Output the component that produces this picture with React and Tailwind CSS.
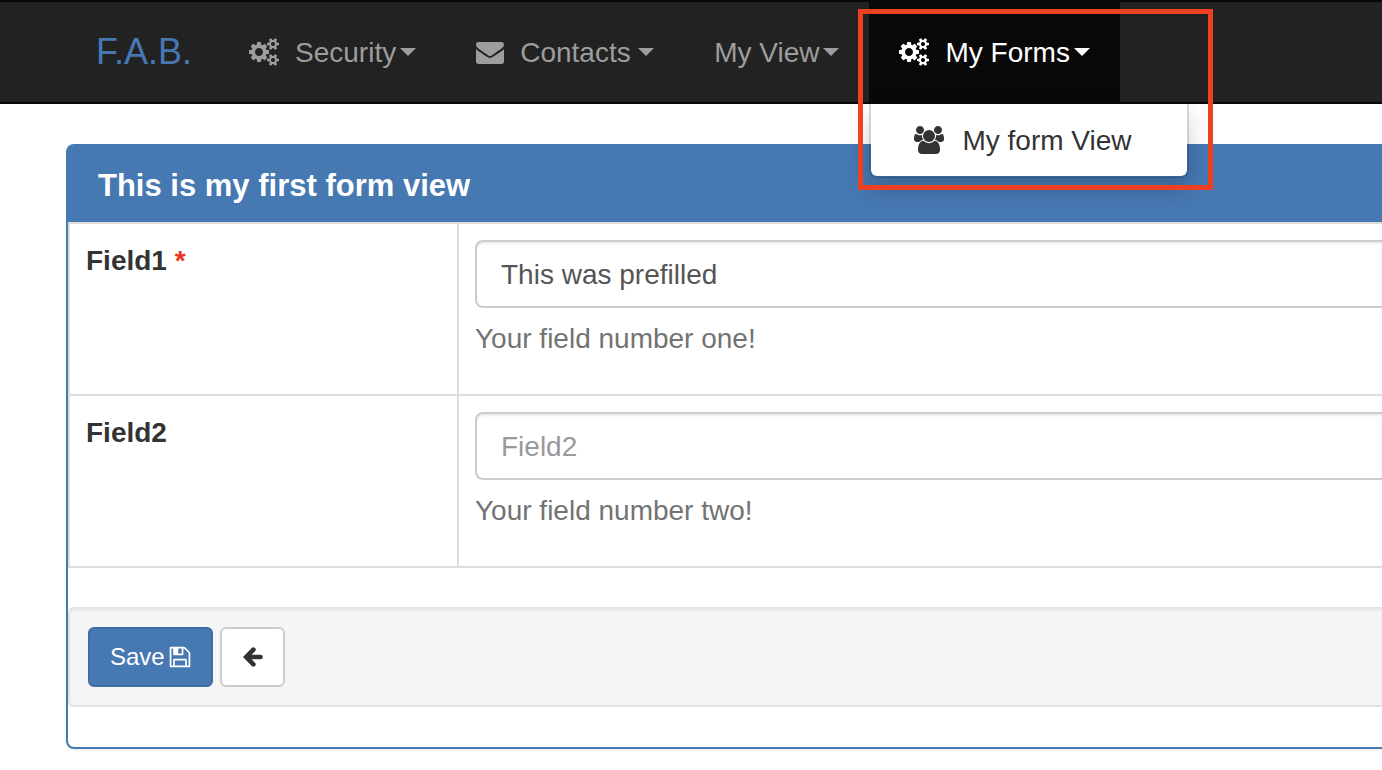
const PATHS = {
  cogs: {
    width: 1920,
    d: "M896 896q0-106-75-181t-181-75-181 75-75 181 75 181 181 75 181-75 75-181zm768 512q0-52-38-90t-90-38-90 38-38 90q0 53 37.5 90.5t90.5 37.5 90.5-37.5 37.5-90.5zm0-1024q0-52-38-90t-90-38-90 38-38 90q0 53 37.5 90.5t90.5 37.5 90.5-37.5 37.5-90.5zm-384 421v185q0 10-7 19.5t-16 10.5l-155 24q-11 35-32 76 34 48 90 115 7 11 7 20 0 12-7 19-23 30-82.5 89.5t-78.5 59.5q-11 0-21-7l-115-90q-37 19-77 31-11 108-23 155-7 24-30 24h-186q-11 0-20-7.5t-10-17.5l-23-153q-34-10-75-31l-118 89q-7 7-20 7-11 0-21-8-144-133-144-160 0-9 7-19 10-14 41-53t47-61q-23-44-35-82l-152-24q-10-1-17-9.5t-7-19.5v-185q0-10 7-19.5t16-10.5l155-24q11-35 32-76-34-48-90-115-7-11-7-20 0-12 7-20 22-30 82-89t79-59q11 0 21 7l115 90q34-18 77-32 11-108 23-154 7-24 30-24h186q11 0 20 7.5t10 17.5l23 153q34 10 75 31l118-89q8-7 20-7 11 0 21 8 144 133 144 160 0 8-7 19-12 16-42 54t-45 60q23 48 34 82l152 23q10 2 17 10.5t7 19.5zm640 533v140q0 16-149 31-12 27-30 52 51 113 51 138 0 4-4 7-122 71-124 71-8 0-46-47t-52-68q-20 2-30 2t-30-2q-14 21-52 68t-46 47q-2 0-124-71-4-3-4-7 0-25 51-138-18-25-30-52-149-15-149-31v-140q0-16 149-31 13-29 30-52-51-113-51-138 0-4 4-7 4-2 35-20t59-34 30-16q8 0 46 46.5t52 67.5q20-2 30-2t30 2q51-71 92-112l6-2q4 0 124 70 4 3 4 7 0 25-51 138 17 23 30 52 149 15 149 31zm0-1024v140q0 16-149 31-12 27-30 52 51 113 51 138 0 4-4 7-122 71-124 71-8 0-46-47t-52-68q-20 2-30 2t-30-2q-14 21-52 68t-46 47q-2 0-124-71-4-3-4-7 0-25 51-138-18-25-30-52-149-15-149-31v-140q0-16 149-31 13-29 30-52-51-113-51-138 0-4 4-7 4-2 35-20t59-34 30-16q8 0 46 46.5t52 67.5q20-2 30-2t30 2q51-71 92-112l6-2q4 0 124 70 4 3 4 7 0 25-51 138 17 23 30 52 149 15 149 31z",
  },
  envelope: {
    width: 1792,
    d: "M1792 710v794q0 66-47 113t-113 47h-1472q-66 0-113-47t-47-113v-794q44 49 101 87 362 246 497 345 57 42 92.5 65.5t94.5 48 110 24.5h2q51 0 110-24.5t94.5-48 92.5-65.5q170-123 498-345 57-39 100-87zm0-294q0 79-49 151t-122 123q-376 261-468 325-10 7-42.5 31t-54 38.5-52 32.5-57.5 27-50 9h-2q-23 0-50-9t-57.5-27-52-32.5-54-38.5-42.5-31q-91-64-262-182.5t-205-142.5q-62-42-117-115.5t-55-136.5q0-78 41.5-130t118.5-52h1472q65 0 112.5 47t47.5 113z",
  },
  users: {
    width: 1920,
    d: "M593 896q-162 5-265 128h-134q-82 0-138-40.5t-56-118.5q0-353 124-353 6 0 43.5 21t97.5 42.5 119 21.5q67 0 133-23-5 37-5 66 0 139 81 256zm1071 637q0 120-73 189.5t-194 69.5h-874q-121 0-194-69.5t-73-189.5q0-53 3.5-103.5t14-109 26.5-108.5 43-97.5 62-81 85.5-53.5 111.5-20q10 0 43 21.5t73 48 107 48 135 21.5 135-21.5 107-48 73-48 43-21.5q61 0 111.5 20t85.5 53.5 62 81 43 97.5 26.5 108.5 14 109 3.5 103.5zm-1024-1277q0 106-75 181t-181 75-181-75-75-181 75-181 181-75 181 75 75 181zm704 384q0 159-112.5 271.5t-271.5 112.5-271.5-112.5-112.5-271.5 112.5-271.5 271.5-112.5 271.5 112.5 112.5 271.5zm576 225q0 78-56 118.5t-138 40.5h-134q-103-123-265-128 81-117 81-256 0-29-5-66 66 23 133 23 59 0 119-21.5t97.5-42.5 43.5-21q124 0 124 353zm-128-609q0 106-75 181t-181 75-181-75-75-181 75-181 181-75 181 75 75 181z",
  },
  floppy: {
    width: 1792,
    d: "M512 1536h768v-384h-768v384zm896 0h128v-896q0-14-10-38.5t-20-34.5l-281-281q-10-10-34-20t-39-10v416q0 40-28 68t-68 28h-576q-40 0-68-28t-28-68v-416h-128v1280h128v-416q0-40 28-68t68-28h832q40 0 68 28t28 68v416zm-384-928v-320q0-13-9.5-22.5t-22.5-9.5h-192q-13 0-22.5 9.5t-9.5 22.5v320q0 13 9.5 22.5t22.5 9.5h192q13 0 22.5-9.5t9.5-22.5zm640 32v928q0 40-28 68t-68 28h-1344q-40 0-68-28t-28-68v-1344q0-40 28-68t68-28h928q40 0 88 20t76 48l280 280q28 28 48 76t20 88z",
  },
};

function Icon({ name, className }) {
  const { width, d } = PATHS[name];
  return (
    <svg viewBox={`0 0 ${width} 1792`} className={`shrink-0 ${className}`} fill="currentColor" aria-hidden="true">
      <path d={d} />
    </svg>
  );
}

function ArrowLeft() {
  return (
    <svg
      viewBox="0 0 24 24"
      className="size-6 shrink-0"
      fill="none"
      stroke="currentColor"
      strokeWidth="4.6"
      strokeLinecap="round"
      aria-hidden="true"
    >
      <path d="M13.4 4.6 6.2 12l7.2 7.4M7.5 12h13" />
    </svg>
  );
}

function Caret() {
  return (
    <svg viewBox="0 0 16 8" className="ml-1 h-2 w-4 shrink-0" fill="currentColor" aria-hidden="true">
      <path d="M0 0h16l-8 8z" />
    </svg>
  );
}

function NavItem({ icon, iconClass, label, labelClass = "", active, children }) {
  return (
    <li className={`relative flex ${active ? "bg-[#080808] text-white" : "text-[#9d9d9d]"}`}>
      <button type="button" aria-expanded={!!active} className="flex items-center px-[30px]">
        {icon && <Icon name={icon} className={`mr-4 ${iconClass}`} />}
        <span className={`pt-px text-left ${labelClass}`}>{label}</span>
        <Caret />
      </button>
      {children}
    </li>
  );
}

function FieldRow({ id, label, required, value, help }) {
  return (
    <tr className="h-[172px] align-top">
      <th scope="row" className="w-[389px] border-2 border-[#ddd] px-4 py-[17px] text-left">
        <label htmlFor={id}>
          {label}
          {required && <strong className="text-[#ee3322]"> *</strong>}
        </label>
      </th>
      <td className="border-2 border-r-0 border-[#ddd] py-4 pl-4">
        <input
          id={id}
          type="text"
          defaultValue={value}
          placeholder={label}
          className="block h-[68px] w-full rounded-l-lg border-2 border-r-0 border-[#ccc] bg-white px-6 pt-0.5 text-[#555] shadow-[inset_0_2px_2px_rgba(0,0,0,0.075)] outline-none placeholder:text-[#999]"
        />
        <p className="mt-[11px] text-[#737373]">{help}</p>
      </td>
    </tr>
  );
}

export default function App() {
  return (
    <div className="overflow-x-clip bg-white pb-5 font-['Liberation_Sans',Arial,sans-serif] text-[28px] leading-10 text-[#333]">
      <nav className="flex h-[104px] border-y-2 border-[#080808] bg-[#222]">
        <a href="#" className="flex items-center pr-[27px] pl-24 text-[36px] text-[#4678b2]">
          F.A.B.
        </a>
        <ul className="flex">
          <NavItem icon="cogs" iconClass="h-7 w-[30px]" label="Security" />
          <NavItem icon="envelope" iconClass="size-7" label="Contacts" labelClass="min-w-[114px]" />
          <NavItem label="My View" />
          <NavItem icon="cogs" iconClass="h-7 w-[30px]" label="My Forms" active>
            <div className="absolute top-full left-0 z-10 mt-[2px] w-80 rounded-b-lg border-2 border-t-0 border-black/15 bg-white bg-clip-padding shadow-[0_12px_24px_rgba(0,0,0,0.175)]">
              <a href="#" className="flex h-[72px] items-center pl-[43px] text-[#333]">
                <Icon name="users" className="mr-[18px] h-7 w-[30px]" />
                <span className="pt-px">My form View</span>
              </a>
            </div>
            <div className="pointer-events-none absolute top-[7px] -left-[11px] z-20 h-[181px] w-[355px] border-[5px] border-[#ee4023]" />
          </NavItem>
        </ul>
      </nav>

      <main className="pt-10 pl-[66px]">
        <section className="rounded-l-lg border-2 border-r-0 border-[#4678b2] bg-white pb-10 shadow-[0_2px_2px_rgba(0,0,0,0.05)]">
          <h4 className="flex h-[76px] items-center bg-[#4678b2] pt-1 pl-[30px] text-[31px] font-bold text-white">
            This is my first form view
          </h4>
          <form onSubmit={(e) => e.preventDefault()}>
            <table className="mb-[39px] w-full table-fixed border-collapse">
              <tbody>
                <FieldRow id="field1" label="Field1" required value="This was prefilled" help="Your field number one!" />
                <FieldRow id="field2" label="Field2" help="Your field number two!" />
              </tbody>
            </table>
            <div className="flex h-[100px] items-center gap-[7px] rounded-l-md border-2 border-r-0 border-[#e3e3e3] bg-[#f5f5f5] pl-[18px] shadow-[inset_0_2px_2px_rgba(0,0,0,0.05)]">
              <button
                type="submit"
                className="flex h-[60px] items-center gap-[3px] rounded-md border-2 border-[#3f6ca3] bg-[#4678b2] pr-[19px] pl-5 text-[24px] text-white"
              >
                Save
                <Icon name="floppy" className="size-6" />
              </button>
              <button
                type="button"
                aria-label="Back"
                className="flex h-[60px] w-[65px] items-center justify-center rounded-md border-2 border-[#ccc] bg-white"
              >
                <ArrowLeft />
              </button>
            </div>
          </form>
        </section>
      </main>
    </div>
  );
}
